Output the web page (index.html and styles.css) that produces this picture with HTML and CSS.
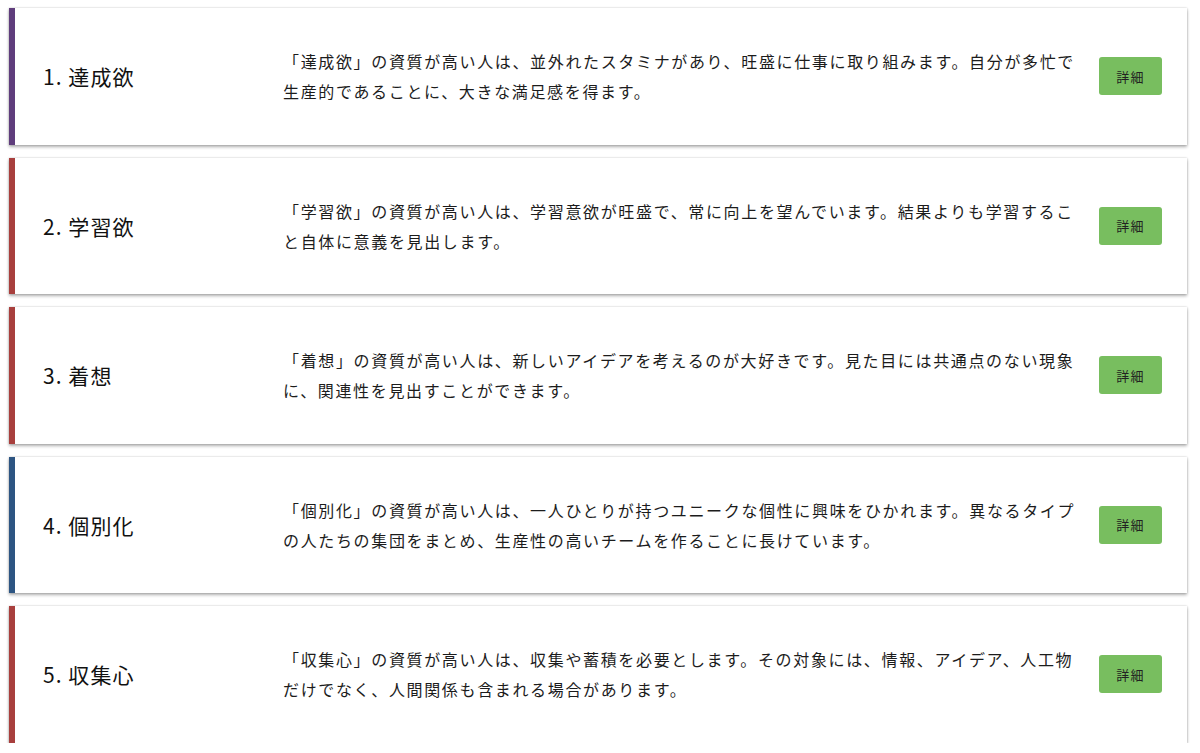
FILE: index.html
```html
<!DOCTYPE html>
<html lang="ja">
<head>
<meta charset="utf-8">
<title>資質</title>
<link rel="stylesheet" href="styles.css">
</head>
<body>
<main class="list">
  <section class="card card--purple">
    <h2 class="card__title">1. 達成欲</h2>
    <p class="card__desc">「達成欲」の資質が高い人は、並外れたスタミナがあり、旺盛に仕事に取り組みます。自分が多忙で生産的であることに、大きな満足感を得ます。</p>
    <button class="card__btn" type="button">詳細</button>
  </section>
  <section class="card card--red">
    <h2 class="card__title">2. 学習欲</h2>
    <p class="card__desc">「学習欲」の資質が高い人は、学習意欲が旺盛で、常に向上を望んでいます。結果よりも学習すること自体に意義を見出します。</p>
    <button class="card__btn" type="button">詳細</button>
  </section>
  <section class="card card--red">
    <h2 class="card__title">3. 着想</h2>
    <p class="card__desc">「着想」の資質が高い人は、新しいアイデアを考えるのが大好きです。見た目には共通点のない現象に、関連性を見出すことができます。</p>
    <button class="card__btn" type="button">詳細</button>
  </section>
  <section class="card card--blue">
    <h2 class="card__title">4. 個別化</h2>
    <p class="card__desc">「個別化」の資質が高い人は、一人ひとりが持つユニークな個性に興味をひかれます。異なるタイプの人たちの集団をまとめ、生産性の高いチームを作ることに長けています。</p>
    <button class="card__btn" type="button">詳細</button>
  </section>
  <section class="card card--red">
    <h2 class="card__title">5. 収集心</h2>
    <p class="card__desc">「収集心」の資質が高い人は、収集や蓄積を必要とします。その対象には、情報、アイデア、人工物だけでなく、人間関係も含まれる場合があります。</p>
    <button class="card__btn" type="button">詳細</button>
  </section>
</main>
</body>
</html>
```

FILE: styles.css
```css
html, body {
  margin: 0;
  padding: 0;
  background: #ffffff;
}

body {
  font-family: "Noto Sans CJK JP", "Noto Sans", sans-serif;
  color: #1c1c1c;
  letter-spacing: 0.1em;
}

.list {
  display: flex;
  flex-direction: column;
  gap: 13px;
  padding: 8px 13px 0 9px;
}

.card {
  display: flex;
  align-items: center;
  height: 136.5px;
  box-sizing: border-box;
  background: #ffffff;
  border-left: 6px solid #a83f3d;
  box-shadow: 0 2px 3px rgba(0, 0, 0, 0.3), 0 0 2px rgba(0, 0, 0, 0.2);
}

.card--purple { border-left-color: #5f3d7c; }
.card--red { border-left-color: #a83f3d; }
.card--blue { border-left-color: #2d5582; }

.card__title {
  flex: 0 0 268px;
  box-sizing: border-box;
  margin: 0;
  padding-left: 28px;
  font-size: 21px;
  font-weight: 400;
  letter-spacing: 0.05em;
  color: #111111;
}

.card__desc {
  flex: 1 1 auto;
  margin: 0;
  font-size: 16px;
  line-height: 30px;
  letter-spacing: 1.65px;
  color: #1c1c1c;
}

.card__btn {
  flex: 0 0 auto;
  width: 63px;
  height: 38px;
  margin: 0 25px 0 19px;
  padding: 0;
  border: none;
  border-radius: 3px;
  background: #78be5f;
  color: #222222;
  font-family: inherit;
  font-size: 13px;
  letter-spacing: 0.1em;
  cursor: pointer;
}
```
